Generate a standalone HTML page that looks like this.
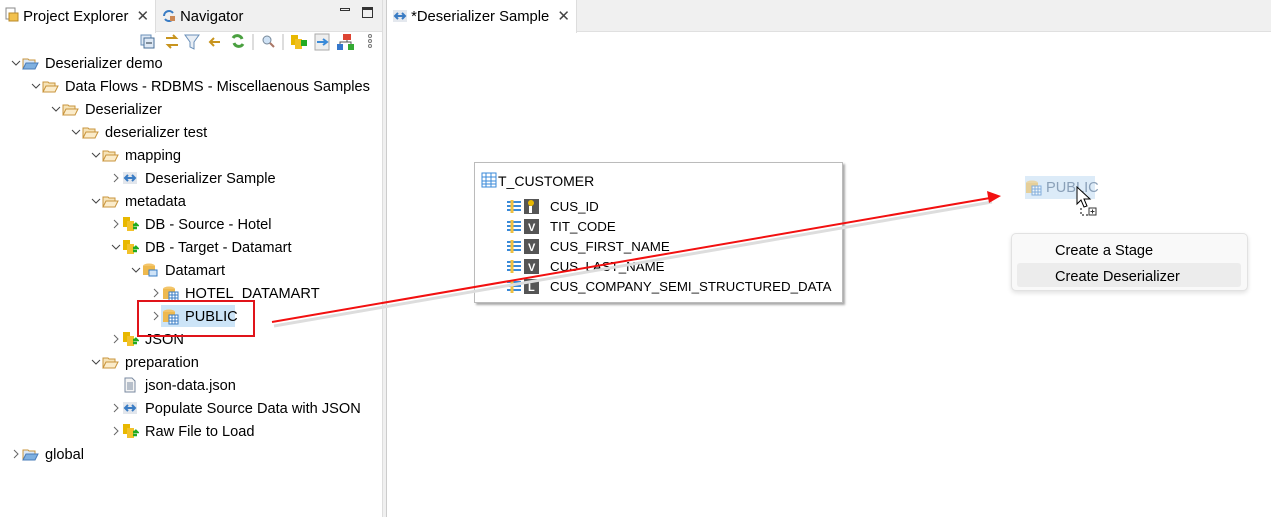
<!DOCTYPE html>
<html><head><meta charset="utf-8"><style>
*{margin:0;padding:0;box-sizing:border-box}
body{width:1271px;height:517px;overflow:hidden;background:#fff;font-family:"Liberation Sans",sans-serif;font-size:14.6px;color:#000;position:relative}
.a{position:absolute;white-space:nowrap}
.row{position:absolute;height:20px;line-height:20px;white-space:nowrap}
.ch{position:absolute;font-size:11px;color:#555}
.tab{position:absolute;top:0;height:32px;line-height:32px;font-size:14.8px}
</style></head><body>
<div class="a" style="left:0;top:0;width:383px;height:32px;background:#f0f0f0;border-bottom:1px solid #e0e0e0"></div>
<div class="a" style="left:0;top:0;width:156px;height:33px;background:#fff;border-right:1px solid #ddd"></div>
<div class="tab" style="left:5px;top:1px">
<svg width="14" height="16" style="vertical-align:-2px"><rect x="1" y="1" width="9" height="11" fill="#fff" stroke="#888"/><rect x="4" y="6" width="9" height="8" fill="#f2c14e" stroke="#b8892a"/></svg> Project Explorer <span style="color:#444;margin-left:4px">✕</span></div>
<div class="tab" style="left:162px;top:1px"><svg width="14" height="14" style="vertical-align:-2px"><path d="M2 7a5 5 0 0 1 9-3M12 7a5 5 0 0 1-9 3" stroke="#3a7cc4" fill="none" stroke-width="2"/><rect x="8" y="7" width="5" height="5" fill="#c85"/></svg> Navigator</div>
<div class="a" style="left:340px;top:8px;width:10px;height:3px;border:1px solid #333"></div>
<div class="a" style="left:362px;top:7px;width:11px;height:11px;border:1px solid #333;border-top-width:3px"></div>
<svg class="a" style="left:138px;top:32px" width="240" height="20">
<rect x="3" y="3" width="10" height="10" fill="#dfe9f5" stroke="#6a8fb8"/><rect x="6" y="6" width="10" height="10" fill="#dfe9f5" stroke="#4a6f98"/><line x1="8" y1="11" x2="14" y2="11" stroke="#234"/>
<path d="M28 6h10l-3-3M40 13H30l3 3" stroke="#c8941e" fill="none" stroke-width="2"/>
<path d="M47 3h14l-5 7v7l-4-2v-5z" fill="#e8eef5" stroke="#6a8fb8"/>
<path d="M72 10h10M76 6l-4 4 4 4" stroke="#c8941e" fill="none" stroke-width="2"/>
<path d="M95 6a5 5 0 0 1 9 1M105 12a5 5 0 0 1-9-1" stroke="#4aa040" fill="none" stroke-width="3"/>
<line x1="115" y1="2" x2="115" y2="18" stroke="#bbb"/>
<circle cx="129" cy="8" r="4" fill="#cfe2f5" stroke="#789"/><line x1="132" y1="11" x2="136" y2="15" stroke="#a76" stroke-width="2"/>
<line x1="145" y1="2" x2="145" y2="18" stroke="#bbb"/>
<rect x="153" y="3" width="7" height="10" fill="#e8b800"/><rect x="157" y="7" width="7" height="10" fill="#f0c020"/><rect x="163" y="8" width="6" height="6" fill="#2a2"/>
<rect x="177" y="2" width="14" height="16" fill="#eee" stroke="#aaa"/><path d="M179 10h10M185 7l4 3-4 3" stroke="#3a8ad8" stroke-width="2" fill="none"/>
<rect x="205" y="2" width="8" height="6" fill="#d43"/><rect x="199" y="12" width="6" height="6" fill="#37c"/><rect x="210" y="12" width="6" height="6" fill="#3a3"/><path d="M209 8v2M202 12v-2h11v2" stroke="#555" fill="none"/>
<circle cx="232" cy="4" r="1.5" fill="none" stroke="#777"/><circle cx="232" cy="9" r="1.5" fill="none" stroke="#777"/><circle cx="232" cy="14" r="1.5" fill="none" stroke="#777"/>
</svg>
<div class="a" style="left:382px;top:0;width:5px;height:517px;background:#f0f0f0;border-left:1px solid #ddd;border-right:1px solid #ccc"></div>
<div class="a" style="left:387px;top:0;width:884px;height:32px;background:#f0f0f0;border-bottom:1px solid #e0e0e0"></div>
<div class="a" style="left:387px;top:0;width:190px;height:33px;background:#fff;border-right:1px solid #ddd"></div>
<div class="tab" style="left:393px;top:1px"><svg width="14" height="14" style="vertical-align:-2px"><rect x="0" y="1" width="14" height="12" fill="#e4e8ee"/><path d="M2 7h10M5 4l-3 3 3 3M9 4l3 3-3 3" stroke="#3a7cc4" fill="none" stroke-width="2"/></svg> *Deserializer Sample <span style="color:#444;margin-left:4px">✕</span></div>

<div id="tree"></div>
<script>
const items=[
[45,'v','fb','Deserializer demo'],[65,'v','f','Data Flows - RDBMS - Miscellaenous Samples'],[85,'v','f','Deserializer'],[105,'v','f','deserializer test'],[125,'v','f','mapping'],[145,'>','fl','Deserializer Sample'],[125,'v','f','metadata'],[145,'>','db','DB - Source - Hotel'],[145,'v','db','DB - Target - Datamart'],[165,'v','dc','Datamart'],[185,'>','sc','HOTEL_DATAMART'],[185,'>','sc','PUBLIC'],[145,'>','db','JSON'],[125,'v','f','preparation'],[145,'','fi','json-data.json'],[145,'>','fl','Populate Source Data with JSON'],[145,'>','db','Raw File to Load'],[45,'>','fb','global']];
const ic={
f:'<path d="M1 4h5l1 1h6v9H1z" fill="#f6e3b8" stroke="#c8943c"/><path d="M1 14l3-6h12l-3 6z" fill="#fbeccb" stroke="#c8943c"/>',
fb:'<path d="M1 4h5l1 1h6v9H1z" fill="#dbe8f6" stroke="#c8943c"/><path d="M1 14l3-6h12l-3 6z" fill="#7fb0e0" stroke="#4a7cb8"/>',
fl:'<rect x="1" y="2" width="14" height="12" fill="#e2e6ec"/><path d="M3 8h10M6 5l-3 3 3 3M10 5l3 3-3 3" stroke="#3a7cc4" fill="none" stroke-width="2"/>',
db:'<rect x="1" y="1" width="7" height="10" fill="#e8b800"/><rect x="5" y="5" width="7" height="10" fill="#f2c22a"/><path d="M11 9h4l-2-2M15 12h-4" stroke="#2a2" stroke-width="2.5" fill="none"/>',
dc:'<ellipse cx="7" cy="4" rx="6" ry="2.5" fill="#f3c56a"/><rect x="1" y="4" width="12" height="9" fill="#eeb94e"/><rect x="7" y="8" width="8" height="6" fill="#cfe3f7" stroke="#3a7cc4"/>',
sc:'<ellipse cx="7" cy="4" rx="6" ry="2.5" fill="#f3c56a"/><rect x="1" y="4" width="12" height="10" fill="#eeb94e"/><rect x="7" y="7" width="9" height="9" fill="#fff" stroke="#3a7cc4"/><path d="M7 10h9M7 13h9M10 7v9M13 7v9" stroke="#3a7cc4"/>',
fi:'<path d="M3 1h7l3 3v11H3z" fill="#f4f4f4" stroke="#7a8aa0"/><path d="M5 6h6M5 8h6M5 10h6M5 12h6" stroke="#7a8aa0"/>'};
let h='';items.forEach((it,i)=>{const y=63+23*i-9;const x=it[0];
if(i==11)h+=`<div class="a" style="left:${x-24}px;top:${y-2}px;width:74px;height:22px;background:#cce4f7"></div>`;
if(it[1])h+=`<div class="ch" style="left:${x-34}px;top:${y+4}px">${it[1]=='v'?'<svg width="10" height="10"><path d="M1 3l4 4 4-4" stroke="#444" fill="none"/></svg>':'<svg width="10" height="10"><path d="M3 1l4 4-4 4" stroke="#666" fill="none"/></svg>'}</div>`;
h+=`<svg class="a" style="left:${x-23}px;top:${y+1}px" width="17" height="17">${ic[it[2]]}</svg>`;
h+=`<div class="row" style="left:${x}px;top:${y}px">${it[3]}</div>`;});
document.getElementById('tree').innerHTML=h;
</script>
<div class="a" style="left:137px;top:300px;width:118px;height:37px;border:2px solid #e0141a"></div>

<div class="a" style="left:474px;top:162px;width:369px;height:141px;border:1px solid #bbb;box-shadow:2px 2px 2px #aaa;background:#fff"></div>
<svg class="a" style="left:481px;top:172px" width="16" height="16"><rect x="1" y="1" width="14" height="14" fill="#fff" stroke="#3a8ad8"/><path d="M1 5h14M1 9h14M1 12h14M5 1v14M10 1v14" stroke="#3a8ad8"/></svg>
<div class="row" style="left:498px;top:171px;font-size:14px">T_CUSTOMER</div>
<div id="cols"></div>
<script>
const c=[['i','CUS_ID'],['V','TIT_CODE'],['V','CUS_FIRST_NAME'],['V','CUS_LAST_NAME'],['L','CUS_COMPANY_SEMI_STRUCTURED_DATA']];
let s='';c.forEach((k,i)=>{const y=196+20*i;
s+=`<svg class="a" style="left:507px;top:${y+2}px" width="36" height="16"><rect x="0" y="1" width="14" height="14" fill="#fff"/><path d="M0 4h14M0 8h14M0 12h14" stroke="#3a8ad8" stroke-width="2"/><path d="M5 2v13" stroke="#f0c040" stroke-width="3"/><rect x="17" y="1" width="15" height="15" fill="#555"/><text x="21" y="13" fill="#fff" font-size="11" font-weight="bold" font-family="Liberation Sans">${k[0]=='i'?'':k[0]}</text>${k[0]=='i'?'<circle cx="24" cy="5" r="3" fill="#e8b800"/><rect x="22" y="8" width="3" height="7" fill="#fff"/>':''}</svg>`;
s+=`<div class="row" style="left:550px;top:${y+1}px;font-size:13.3px">${k[1]}</div>`;});
document.getElementById('cols').innerHTML=s;
</script>

<svg class="a" style="left:0;top:0" width="1271" height="517">
<line x1="272" y1="323" x2="990" y2="199" stroke="#ddd" stroke-width="3" transform="translate(2,3)"/>
<line x1="272" y1="322" x2="990" y2="198" stroke="#f21010" stroke-width="2"/>
<path d="M1001 196l-14-5 2 12z" fill="#f21010"/>
</svg>

<div class="a" style="left:1025px;top:176px;width:70px;height:23px;background:#dcebf8"></div>
<svg class="a" style="left:1025px;top:179px;opacity:.55" width="17" height="17"><ellipse cx="7" cy="4" rx="6" ry="2.5" fill="#f3c56a"/><rect x="1" y="4" width="12" height="10" fill="#eeb94e"/><rect x="7" y="7" width="9" height="9" fill="#fff" stroke="#3a7cc4"/><path d="M7 10h9M7 13h9M10 7v9M13 7v9" stroke="#3a7cc4"/></svg>
<div class="row" style="left:1046px;top:178px;color:#8aa0b8">PUBLIC</div>
<svg class="a" style="left:1075px;top:186px" width="24" height="32"><path d="M2 1v17l4-4 3 7 3-1-3-7h6z" fill="#fff" stroke="#000"/><path d="M6 22v7h8" stroke="#000" stroke-dasharray="2 2" fill="none"/><rect x="14" y="22" width="7" height="7" fill="#fff" stroke="#333"/><path d="M17.5 23.5v4M15.5 25.5h4" stroke="#333"/></svg>

<div class="a" style="left:1011px;top:233px;width:237px;height:58px;background:#f9f9f9;border:1px solid #e2e2e2;border-radius:5px;box-shadow:0 2px 5px rgba(0,0,0,.12)"></div>
<div class="a" style="left:1017px;top:263px;width:224px;height:24px;background:#ececec;border-radius:3px"></div>
<div class="row" style="left:1055px;top:241px">Create a Stage</div>
<div class="row" style="left:1055px;top:267px">Create Deserializer</div>
</body></html>
